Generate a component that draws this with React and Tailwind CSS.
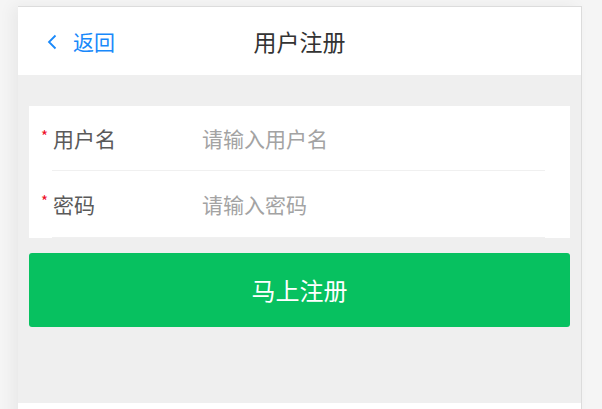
export default function App() {
  return (
    <div
      className="h-[409px] w-[602px] overflow-hidden bg-[#f5f5f5] pl-[18px] pt-[6px]"
      style={{ fontFamily: '"Noto Sans CJK SC", "Noto Sans", sans-serif' }}
    >
      <div className="flex h-[420px] w-[564px] flex-col border-t border-r border-[#dcdcdc] bg-white shadow-[-6px_0_14px_rgba(0,0,0,0.05)]">
        <Header />
        <div className="flex h-[328px] flex-col bg-[#efefef] px-[11px] pt-[31px]">
          <div className="bg-white">
            <Field label="用户名" placeholder="请输入用户名" height="h-[65px]" />
            <Field label="密码" placeholder="请输入密码" height="h-[67px]" />
          </div>
          <button className="mt-[15px] flex h-[74px] w-full items-center justify-center rounded-[3px] bg-[#07c160] text-[24px] text-white">
            马上注册
          </button>
        </div>
        <div className="flex-1 bg-white" />
      </div>
    </div>
  );
}

function Header() {
  return (
    <div className="relative flex h-[68px] items-center justify-center bg-white">
      <div className="absolute left-[29px] top-0 flex h-full items-center gap-[16px] text-[#1989fa]">
        <svg width="10" height="16" viewBox="0 0 10 16" fill="none" className="mt-[1px]">
          <polyline points="8.5,1.5 2,8 8.5,14.5" stroke="#1989fa" strokeWidth="1.8" />
        </svg>
        <span className="text-[21px] leading-none">返回</span>
      </div>
      <span className="text-[23px] leading-none text-[#333]">用户注册</span>
    </div>
  );
}

function Field({ label, placeholder, height }) {
  return (
    <div className={`relative flex items-center ${height}`}>
      <span className="absolute left-[12px] top-[22px] text-[15px] leading-none text-[#ee0a24]">*</span>
      <span className="ml-[24px] w-[149px] text-[21px] text-[#5a5a5a]">{label}</span>
      <span className="text-[21px] text-[#a3a3a3]">{placeholder}</span>
      <div className="absolute bottom-0 left-[23px] right-[25px] h-px bg-[#f0f0f0]" />
    </div>
  );
}
